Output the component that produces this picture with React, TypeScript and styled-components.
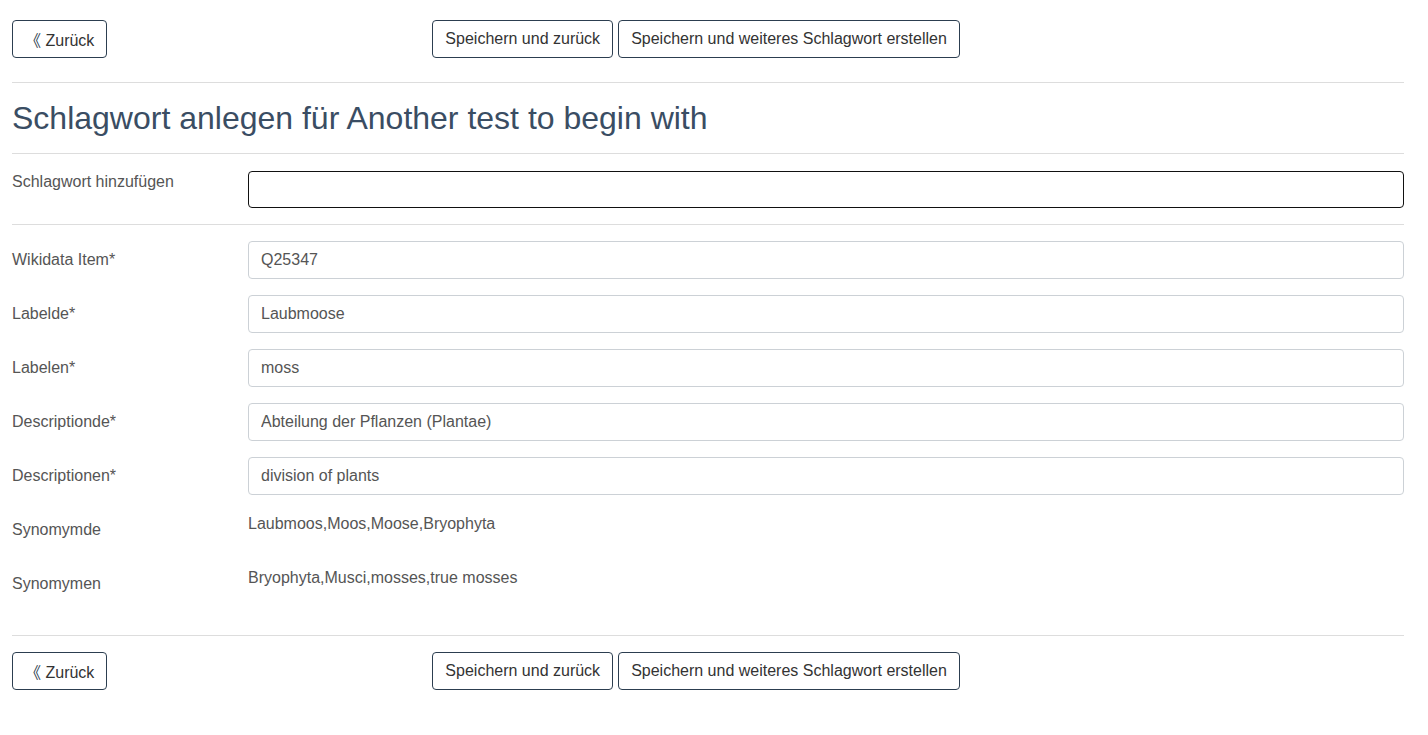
import { createGlobalStyle } from "styled-components";
import styled from "styled-components";

const GlobalStyle = createGlobalStyle`
    html, body {
        margin: 0;
        padding: 0;
        background: #fff;
    }
    body {
        font-family: "Liberation Sans", Arial, "Noto Sans CJK SC", sans-serif;
        font-size: 16px;
        line-height: 20px;
        color: #555;
    }
`;

const fields = [
    { label: "Wikidata Item*", value: "Q25347" },
    { label: "Labelde*", value: "Laubmoose" },
    { label: "Labelen*", value: "moss" },
    { label: "Descriptionde*", value: "Abteilung der Pflanzen (Plantae)" },
    { label: "Descriptionen*", value: "division of plants" },
];

const synonyms = [
    { label: "Synomymde", value: "Laubmoos,Moos,Moose,Bryophyta" },
    { label: "Synomymen", value: "Bryophyta,Musci,mosses,true mosses" },
];

function Actions() {
    return (
        <Toolbar>
            <Button type="button">
                <span className="back">《</span> Zurück
            </Button>
            <ButtonGroup>
                <Button type="button">Speichern und zurück</Button>
                <Button type="button">
                    Speichern und weiteres Schlagwort erstellen
                </Button>
            </ButtonGroup>
        </Toolbar>
    );
}

function App() {
    return (
        <>
            <GlobalStyle />
            <Page>
                <Actions />
                <Rule $mt={24} />
                <Title>Schlagwort anlegen für Another test to begin with</Title>
                <Rule />
                <FormRow $first>
                    <Label $flat>Schlagwort hinzufügen</Label>
                    <Input $active defaultValue="" />
                </FormRow>
                <Rule $mt={16} $mb={16} />
                {fields.map((f) => (
                    <FormRow key={f.label}>
                        <Label>{f.label}</Label>
                        <Input defaultValue={f.value} />
                    </FormRow>
                ))}
                {synonyms.map((s) => (
                    <FormRow key={s.label}>
                        <Label>{s.label}</Label>
                        <Static>{s.value}</Static>
                    </FormRow>
                ))}
                <Rule $mt={16} $mb={16} />
                <Actions />
            </Page>
        </>
    );
}

export default App;

const Page = styled.div`
    padding: 20px 24px 40px 12px;
    display: flex;
    flex-direction: column;
`;

const Toolbar = styled.div`
    display: flex;
    align-items: center;
`;

const ButtonGroup = styled.div`
    display: flex;
    gap: 5px;
    margin-left: 325px;
`;

const Button = styled.button`
    font-family: inherit;
    font-size: 16px;
    line-height: 20px;
    color: #333;
    background: #fff;
    border: 1px solid #2c3e50;
    border-radius: 4px;
    padding: 8px 12px;
    height: 38px;
    cursor: pointer;

    .back {
        color: #2c3e50;
        font-family: "Noto Sans CJK SC", sans-serif;
        font-size: 16px;
    }
`;

const Rule = styled.hr<{ $mt?: number; $mb?: number }>`
    border: 0;
    border-top: 1px solid #ddd;
    margin: ${(p) => p.$mt ?? 0}px 0 ${(p) => p.$mb ?? 0}px;
    width: 100%;
`;

const Title = styled.h1`
    font-size: 32px;
    line-height: 36px;
    font-weight: 400;
    color: #3a4d63;
    margin: 17px 0 17px;
`;

const FormRow = styled.div<{ $first?: boolean }>`
    display: grid;
    grid-template-columns: 236px 1fr;
    min-height: ${(p) => (p.$first ? "37px" : "38px")};
    margin-top: ${(p) => (p.$first ? "17px" : "0")};
    margin-bottom: ${(p) => (p.$first ? "0" : "16px")};
`;

const Label = styled.label<{ $flat?: boolean }>`
    font-size: 16px;
    line-height: 20px;
    color: #555;
    padding-top: ${(p) => (p.$flat ? "1px" : "9px")};
`;

const Input = styled.input<{ $active?: boolean }>`
    font-family: inherit;
    font-size: 16px;
    color: #555;
    height: ${(p) => (p.$active ? "37px" : "38px")};
    box-sizing: border-box;
    padding: 6px 12px;
    border: 1px solid ${(p) => (p.$active ? "#111" : "#ccd1d6")};
    border-radius: 4px;
    outline: none;
    width: 100%;
`;

const Static = styled.div`
    font-size: 16px;
    line-height: 20px;
    color: #555;
    padding-top: 3px;
`;
